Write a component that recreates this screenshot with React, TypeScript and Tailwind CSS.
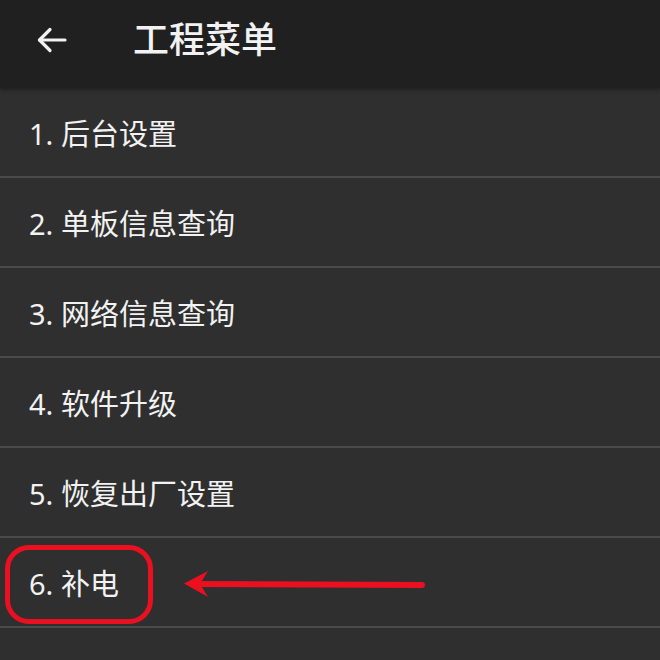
import React from "react";

const items = ["1. 后台设置", "2. 单板信息查询", "3. 网络信息查询", "4. 软件升级", "5. 恢复出厂设置", "6. 补电", ""];

export default function App() {
  return (
    <div
      className="w-[660px] h-[660px] overflow-hidden bg-[#2f2f2f] text-[#f2f2f2]"
      style={{ fontFamily: '"Noto Sans", "Noto Sans CJK SC", sans-serif' }}
    >
      <div className="h-[88px] pb-[8px] bg-[#202020] flex items-center shadow-[0_2px_4px_rgba(0,0,0,0.35)] relative z-10">
        <div className="w-[133px] flex items-center pl-[36px]">
          <svg width="32" height="28" viewBox="0 0 32 28" fill="none" stroke="#f2f2f2" strokeWidth="3.2" strokeLinecap="round" strokeLinejoin="round">
            <path d="M29 14H3.5" />
            <path d="M14 3.5L3.5 14L14 24.5" />
          </svg>
        </div>
        <div className="text-[36px] leading-none font-medium">工程菜单</div>
      </div>
      <div className="flex flex-col">
        {items.map((t, i) => (
          <div key={i} className="relative h-[90px] border-b-2 border-[#4b4b4b] flex items-center pl-[29px] shrink-0">
            <span className="text-[29px] leading-none pt-[2px]">{t}</span>
            {i === 5 && (
              <>
                <div className="absolute left-[5px] top-[7px] w-[148px] h-[79px] rounded-[24px] border-[5px] border-[#ea1020]" />
                <svg className="absolute left-[180px] top-[28px]" width="250" height="36" viewBox="0 0 250 36">
                  <path d="M12 18 L242 19" stroke="#ea1020" strokeWidth="6" strokeLinecap="round" />
                  <path d="M4 17.5 L28 5 L20 18 L28 31 Z" fill="#ea1020" />
                </svg>
              </>
            )}
          </div>
        ))}
      </div>
    </div>
  );
}
